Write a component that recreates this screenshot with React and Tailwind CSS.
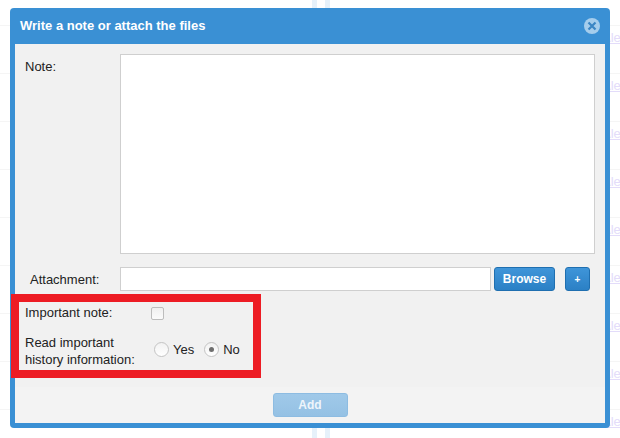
import { useState } from "react";

const rows = [0, 1, 2, 3, 4, 5, 6, 7, 8];

function Radio({ label, checked }) {
  return (
    <label className="flex items-center gap-[4px]">
      <span className="flex h-[15px] w-[15px] items-center justify-center rounded-full border border-[#c4c4c4] bg-gradient-to-b from-[#f2f2f2] to-[#ffffff]">
        {checked && <span className="h-[5px] w-[5px] rounded-full bg-[#6e6e6e]" />}
      </span>
      <span>{label}</span>
    </label>
  );
}

function BlueButton({ children, className = "" }) {
  return (
    <button
      type="button"
      className={`h-[24px] rounded-[3px] border border-[#1f6fb0] bg-gradient-to-b from-[#3f95d9] to-[#2b80c5] font-bold text-white ${className}`}
    >
      {children}
    </button>
  );
}

export default function App() {
  const [note, setNote] = useState("");

  return (
    <div className="relative h-[438px] w-[620px] overflow-hidden bg-white font-['Liberation_Sans',Arial,sans-serif] text-[13px] text-[#222]">
      {/* page behind the dialog */}
      <div className="absolute inset-y-0 left-[312px] w-[5px] bg-[#e6f1fa]" />
      <div className="absolute inset-y-0 left-[325px] w-[5px] bg-[#e6f1fa]" />
      <div className="pt-[25px]">
        {rows.map((r) => (
          <div key={r} className="h-[48px] border-t border-[#f5f5f5] pl-[602px] pt-[2px]">
            <span className="whitespace-nowrap text-[#e3dcfa] underline">Alert</span>
          </div>
        ))}
      </div>

      {/* dialog */}
      <div className="absolute left-[10px] top-[8px] flex h-[420px] w-[600px] flex-col rounded-[4px] bg-[#3a90d4] px-[5px] pb-[5px]">
        <div className="flex h-[36px] shrink-0 items-center justify-between pl-[5px] pr-[5px]">
          <h2 className="font-bold text-white">Write a note or attach the files</h2>
          <svg width="16" height="16" viewBox="0 0 16 16">
            <circle cx="8" cy="8" r="8" fill="#a5cdec" />
            <path d="M4.5 4.5l7 7M11.5 4.5l-7 7" stroke="#3b86c4" strokeWidth="2.2" />
          </svg>
        </div>

        <div className="flex flex-1 flex-col bg-[#f1f1f1]">
          <div className="flex flex-1 flex-col pl-[10px] pt-[10px]">
            <div className="flex">
              <label className="w-[95px] pt-[3px]">Note:</label>
              <textarea
                value={note}
                onChange={(e) => setNote(e.target.value)}
                className="h-[200px] w-[475px] resize-none border border-[#cfcfcf] bg-white"
              />
            </div>

            <div className="mt-[13px] flex items-center">
              <label className="w-[95px] pl-[5px] pt-[1px]">Attachment:</label>
              <input className="h-[24px] w-[371px] border border-[#cfcfcf] bg-white" />
              <BlueButton className="ml-[3px] w-[61px] text-xs">Browse</BlueButton>
              <BlueButton className="ml-[10px] w-[25px] text-[10px]">+</BlueButton>
            </div>

            <div className="mt-[15px] flex h-[14px] items-center">
              <span className="w-[126px]">Important note:</span>
              <span className="h-[13px] w-[13px] rounded-[2px] border border-[#bdbdbd] bg-gradient-to-b from-[#f0f0f0] to-[#fbfbfb]" />
            </div>

            <div className="mt-[14px] flex items-center">
              <span className="w-[129px] leading-[17px]">
                Read important
                <br />
                history information:
              </span>
              <div className="flex gap-[10px] pb-[3px]">
                <Radio label="Yes" />
                <Radio label="No" checked />
              </div>
            </div>
          </div>

          <div className="flex h-[36px] shrink-0 justify-center bg-[#f3f3f3] pt-[6px]">
            <button
              type="button"
              className="h-[24px] w-[75px] rounded-[3px] border border-[#8dbce2] bg-gradient-to-b from-[#a0c9e9] to-[#95c1e4] text-xs font-bold text-[#eef5fb]"
            >
              Add
            </button>
          </div>
        </div>
      </div>

      {/* red annotation on top of the screenshot */}
      <div className="absolute left-[11px] top-[294px] h-[84px] w-[250px] border-[8px] border-[#ed1c24]" />
    </div>
  );
}
